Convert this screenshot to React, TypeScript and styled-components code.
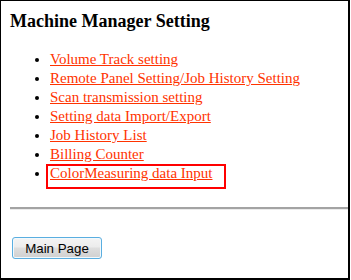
import styled, { createGlobalStyle } from "styled-components";

const GlobalStyle = createGlobalStyle`
  html, body {
    margin: 0;
    padding: 0;
    background: #ffffff;
  }
`;

const Frame = styled.div`
  box-sizing: border-box;
  width: 350px;
  height: 280px;
  border-style: solid;
  border-color: #000000;
  border-width: 1px 2px 2px 1px;
  padding: 10px 0 0 9px;
  background: #ffffff;
  font-family: "Liberation Serif", "Times New Roman", serif;
  color: #000000;
`;

const Title = styled.h3`
  margin: 0;
  font-size: 18px;
  line-height: 20px;
  font-weight: bold;
`;

const MenuList = styled.ul`
  margin: 19px 0 0;
  padding-left: 40px;
  font-size: 15px;
  line-height: 19px;
`;

const MenuItem = styled.li`
  list-style: disc;
`;

const MenuLink = styled.a<{ $selected?: boolean }>`
  color: #ff3300;
  text-decoration: underline;
  cursor: pointer;
  ${(p) =>
    p.$selected &&
    `
    display: inline-block;
    margin-left: -4px;
    padding: 0 12px 6px 2px;
    line-height: 15px;
    border: 2px solid #ff0000;
  `}
`;

const Divider = styled.hr`
  margin: 18px 0 0;
  height: 0;
  border: none;
  border-top: 2px solid #a3a3a3;
  border-bottom: 1px solid #ebebeb;
`;

const ButtonRow = styled.div`
  padding: 27px 0 0 2px;
`;

const PageButton = styled.button`
  box-sizing: border-box;
  width: 90px;
  height: 22px;
  padding: 0;
  border: 1px solid #5aaee0;
  border-radius: 3px;
  background: linear-gradient(
    to bottom,
    #f4f4f4 0%,
    #ececec 45%,
    #dedede 50%,
    #d0d0d0 100%
  );
  box-shadow: inset 0 0 0 1px #f2f9fd;
  font-family: "Liberation Sans", Arial, sans-serif;
  font-size: 13.33px;
  color: #000000;
  cursor: pointer;
`;

const links = [
  "Volume Track setting",
  "Remote Panel Setting/Job History Setting",
  "Scan transmission setting",
  "Setting data Import/Export",
  "Job History List",
  "Billing Counter",
  "ColorMeasuring data Input",
];

export default function App() {
  return (
    <>
      <GlobalStyle />
      <Frame>
        <Title>Machine Manager Setting</Title>
        <MenuList>
          {links.map((label, i) => (
            <MenuItem key={label}>
              <MenuLink $selected={i === links.length - 1}>{label}</MenuLink>
            </MenuItem>
          ))}
        </MenuList>
        <Divider />
        <ButtonRow>
          <PageButton>Main Page</PageButton>
        </ButtonRow>
      </Frame>
    </>
  );
}
